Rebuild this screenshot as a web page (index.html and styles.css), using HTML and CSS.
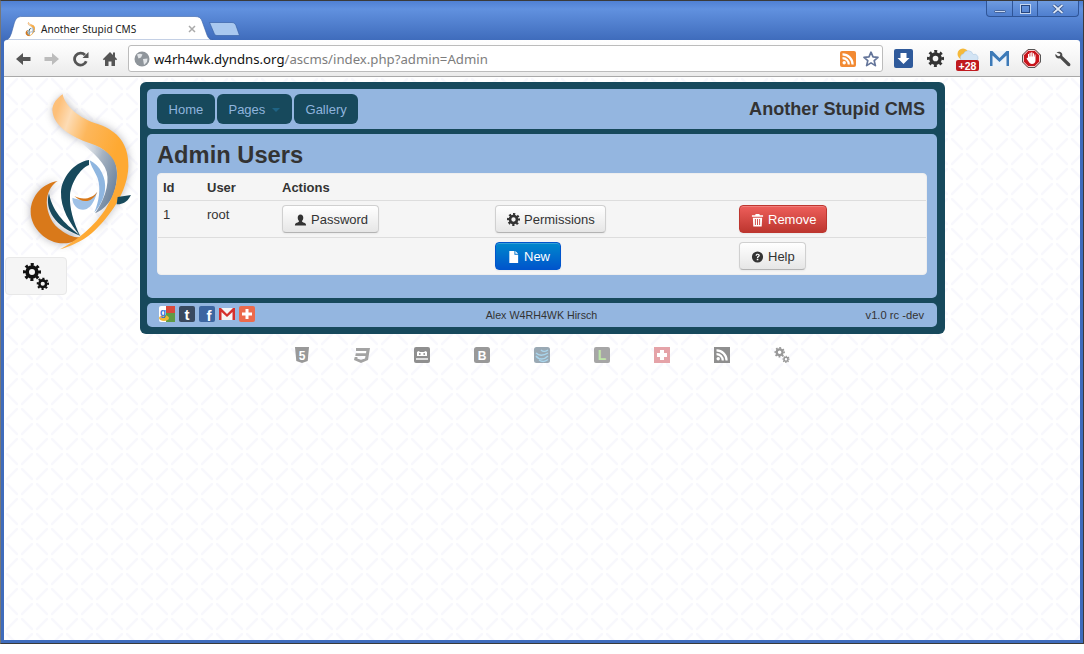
FILE: index.html
```html
<!DOCTYPE html>
<html lang="en">
<head>
<meta charset="utf-8">
<title>Another Stupid CMS</title>
<link rel="stylesheet" href="styles.css">
</head>
<body>
<svg class="defs" width="0" height="0" aria-hidden="true">
  <defs>
    <linearGradient id="lgOrange" x1="0.1" y1="0.05" x2="0.75" y2="0.5">
      <stop offset="0" stop-color="#fdc07a"/><stop offset="0.2" stop-color="#fddcb5"/><stop offset="0.5" stop-color="#fdb75c"/><stop offset="1" stop-color="#fea932"/>
    </linearGradient>
    <linearGradient id="lgGray" x1="0" y1="0" x2="1" y2="0.6">
      <stop offset="0" stop-color="#fff" stop-opacity="0.1"/><stop offset="0.6" stop-color="#a8b4c2"/><stop offset="1" stop-color="#6f86a0"/>
    </linearGradient>
    <filter id="fShadow" x="-30%" y="-30%" width="160%" height="160%">
      <feGaussianBlur stdDeviation="12"/>
    </filter>
    <symbol id="logo" viewBox="0 0 369 510">
      <g filter="url(#fShadow)" opacity="0.4" fill="#445">
        <path d="M128 288C85 295 48 330 47 380C47 430 95 475 145 475C165 475 185 468 197 455L130 430C105 410 92 370 96 340C100 315 112 298 128 288Z"/>
        <path d="M143 28C150 62 190 100 250 118C310 138 342 180 340 245C338 320 285 395 230 445L270 375C295 335 312 290 305 250C298 215 270 190 225 175C170 155 115 125 112 75Z"/>
      </g>
      <path fill="url(#lgGray)" d="M170 150C220 170 270 190 292 215C312 240 310 300 290 340C275 365 255 380 240 385C265 350 285 300 275 260C265 225 220 190 170 150Z"/>
      <path fill="#d9791a" d="M128 288C85 295 48 330 47 380C47 430 95 475 145 475C165 475 185 468 197 455C175 462 150 445 130 430C105 410 92 370 96 340C100 315 112 298 128 288Z"/>
      <path fill="#17495c" d="M102 325C88 375 120 425 197 453C160 425 112 385 102 325Z"/>
      <path fill="url(#lgOrange)" d="M143 28C150 62 190 100 250 118C310 138 342 180 340 245C338 320 285 395 230 445C200 470 165 485 135 493C190 465 240 420 270 375C295 335 312 290 305 250C298 215 270 190 225 175C170 155 115 125 112 75C112 55 128 38 143 28Z"/>
      <path fill="#17495c" d="M222 225C175 232 140 280 138 320C136 370 165 415 195 452C175 410 163 370 165 330C168 295 195 250 222 240Z"/>
      <path fill="#8fb6e0" d="M224 226C255 240 275 280 270 315C266 345 250 370 238 382C252 350 258 310 248 280C240 260 228 245 224 226Z"/>
      <path fill="#9fc1e6" d="M172 338C172 365 195 380 215 372C230 365 240 345 246 322C230 345 205 350 172 338Z"/>
      <path fill="#d9791a" d="M178 333C200 346 232 342 247 320C235 350 205 358 178 333Z"/>
      <path fill="#17495c" d="M308 336L348 330C340 345 330 358 305 358Z"/>
    </symbol>
    <symbol id="gear" viewBox="0 0 24 24">
      <circle cx="12" cy="12" r="6.5" fill="none" stroke="currentColor" stroke-width="5"/>
      <circle cx="12" cy="12" r="10" fill="none" stroke="currentColor" stroke-width="4" stroke-dasharray="3.927 3.927" transform="rotate(-11.25 12 12)"/>
    </symbol>
    <symbol id="gears" viewBox="0 0 26 27">
      <use href="#gear" x="0" y="0" width="18" height="18"/>
      <use href="#gear" x="13.500" y="14.500" width="12.500" height="12.500"/>
    </symbol>
    <symbol id="rss" viewBox="0 0 16 16">
      <circle cx="4.2" cy="11.8" r="1.7" fill="#fff"/>
      <path d="M2.5 7.2a6.3 6.3 0 0 1 6.3 6.3M2.5 3.4a10.1 10.1 0 0 1 10.1 10.1" fill="none" stroke="#fff" stroke-width="2.2"/>
    </symbol>
  </defs>
</svg>

<div class="window">
  <div class="titlebar">
    <div class="tab">
      <svg class="tab-shape" viewBox="0 0 208 24" preserveAspectRatio="none" aria-hidden="true">
        <path d="M0 24C4 24 5 21 6.500 17L9 8C10.500 3 12 0.500 17 0.500H190C194 0.500 196 2 197 5L202 19C203 22 205 24 208 24Z" fill="#fff" stroke="#3a63a8" stroke-width="0.6"/>
      </svg>
      <svg class="tab-favicon" aria-hidden="true"><use href="#logo"/></svg>
      <span class="tab-title">Another Stupid CMS</span>
      <svg class="tab-close" viewBox="0 0 8 8" aria-hidden="true"><path d="M1 1L7 7M7 1L1 7" stroke="#aaa" stroke-width="1.5"/></svg>
    </div>
    <svg class="newtab" viewBox="0 0 31 14" aria-hidden="true">
      <path d="M0.500 0.500H23C25 0.500 26 1.500 27 3.500L30.500 13.500H8C6 13.500 5.500 12.500 5 11Z" fill="#a9c8ef" stroke="#3a63a8" stroke-width="0.7"/>
    </svg>
    <div class="winctl">
      <div class="winbtn w-min"><svg viewBox="0 0 12 3" width="12" height="3" aria-hidden="true"><rect x="0.5" y="0.5" width="11" height="2" rx="1" fill="#c5d6ef" stroke="#26457e" stroke-width="0.7"/></svg></div>
      <div class="winbtn w-max"><svg viewBox="0 0 11 10" width="11" height="10" aria-hidden="true"><rect x="1.5" y="1.5" width="8" height="7" fill="none" stroke="#26457e" stroke-width="1"/><rect x="0.5" y="0.5" width="10" height="9" fill="none" stroke="#c5d6ef" stroke-width="1"/></svg></div>
      <div class="winbtn w-close"><svg viewBox="0 0 12 10" width="12" height="10" aria-hidden="true"><path d="M1.5 1L10.5 9M10.5 1L1.5 9" stroke="#26457e" stroke-width="3.2"/><path d="M1.5 1L10.5 9M10.5 1L1.5 9" stroke="#dbe6f6" stroke-width="1.8"/></svg></div>
    </div>
  </div>

  <div class="toolbar">
    <div class="navgroup">
      <svg class="tbi" viewBox="0 0 16 16" aria-hidden="true"><path d="M8 2L1 8L8 14V10H15.5V6H8Z" fill="#555"/></svg>
      <svg class="tbi" viewBox="0 0 16 16" aria-hidden="true"><path d="M8 2L15 8L8 14V10H.5V6H8Z" fill="#bcbcbc"/></svg>
      <svg class="tbi" viewBox="0 0 16 16" aria-hidden="true"><path d="M13.2 10.2A6 6 0 1 1 12 4" fill="none" stroke="#555" stroke-width="2.8"/><path d="M9.5 7H15.5V1Z" fill="#555"/></svg>
      <svg class="tbi" viewBox="0 0 16 16" aria-hidden="true"><path d="M8 1L0.8 8.2L2 9.3L3 8.5V15H6.5V10.5H9.5V15H13V8.5L14 9.3L15.2 8.2L13 6V1.5H11V4Z" fill="#555"/></svg>
    </div>
    <div class="omnibox">
      <svg class="globe" viewBox="0 0 16 16" aria-hidden="true"><circle cx="8" cy="8" r="7.5" fill="#8f959b"/><path d="M3 3.5C5 2.5 7 2.5 8.5 3.5L7 6.5L4.5 7.5ZM9 8L13.5 7.5L13 11L10 14Z" fill="#e3e6e9"/></svg>
      <span class="url"><span class="url-host">w4rh4wk.dyndns.org</span>/ascms/index.php?admin=Admin</span>
      <svg class="omni-rss" viewBox="0 0 16 16" aria-hidden="true"><rect width="16" height="16" rx="2" fill="#f28a33"/><use href="#rss"/></svg>
      <svg class="omni-star" viewBox="0 0 16 16" aria-hidden="true"><path d="M8 1.2L10 5.9L15 6.3L11.2 9.6L12.4 14.6L8 11.9L3.6 14.6L4.8 9.6L1 6.3L6 5.9Z" fill="#fff" stroke="#64759a" stroke-width="1.7" stroke-linejoin="round"/></svg>
    </div>
    <div class="actions">
      <div class="slot"><svg width="19" height="19" viewBox="0 0 19 19" aria-hidden="true"><rect width="19" height="19" rx="2" fill="#2f5a9b"/><path d="M6.5 4H12.5V9H15.5L9.5 15L3.5 9H6.5Z" fill="#fff"/></svg></div>
      <div class="slot slot-gear"><svg width="17" height="17" aria-hidden="true"><use href="#gear"/></svg></div>
      <div class="slot weather">
        <svg width="23" height="24" viewBox="0 0 23 24" aria-hidden="true">
          <circle cx="7" cy="7" r="5.5" fill="#f5b93a"/>
          <path d="M6 14A4 4 0 0 1 7.500 6.800A5 5 0 0 1 17 7.500A3.500 3.500 0 0 1 20 14Z" fill="#d3e4f4" stroke="#a8c4de" stroke-width="0.5"/>
          <rect x="0" y="13" width="23" height="11" rx="2" fill="#c01a1f"/>
          <text x="11.500" y="22.500" class="badge-text" text-anchor="middle">+28</text>
        </svg>
      </div>
      <div class="slot"><svg width="19" height="15" viewBox="0 0 19 15" aria-hidden="true"><rect width="19" height="15" fill="#eef3f9"/><path d="M0 0H2.500L9.500 7L16.500 0H19V15H16.500V4.500L9.500 11L2.500 4.500V15H0Z" fill="#3d7ab8"/></svg></div>
      <div class="slot"><svg width="19" height="19" viewBox="0 0 19 19" aria-hidden="true"><path d="M6 0.500H13L18.500 6V13L13 18.500H6L0.500 13V6Z" fill="#c8151c" stroke="#555" stroke-width="1"/><path d="M6.200 1.500H12.800L17.500 6.200V12.800L12.800 17.500H6.200L1.500 12.800V6.200Z" fill="none" stroke="#fff" stroke-width="0.800"/><path d="M6 8.500V5H7V7.500H7.500V3.800H8.700V7.500H9.200V3.300H10.400V7.500H10.900V4.300H12V7.500H12.500V5.500H13.500V11.500C13.500 13.500 12 15 10 15C8.300 15 7.300 14 6.500 12.500L4.500 9.500L5.500 8.800Z" fill="#fff"/></svg></div>
      <div class="slot"><svg width="16" height="16" viewBox="0 0 16 16" aria-hidden="true"><path d="M1.500 1.500C3.500 0 6 0.500 7 2.500C7.500 3.700 7.300 4.800 7.300 5L15 12.500C15.700 13.300 15.500 14.300 14.800 14.900C14 15.500 13.200 15.400 12.500 14.800L5 7.300C3 8 1 7 0.500 5C0.300 4.300 0.300 3.700 0.500 3L3 5.300L5 4.800L5.300 3Z" fill="#4a4a4a"/></svg></div>
    </div>
  </div>

  <main class="page">
    <aside class="side">
      <svg class="logo" aria-hidden="true"><use href="#logo"/></svg>
      <div class="admin-btn"><svg width="26" height="27" aria-hidden="true"><use href="#gears"/></svg></div>
    </aside>
    <div class="center">
      <div class="shell">
        <header class="panel navbar">
          <nav class="navlinks">
            <a class="navlink">Home</a>
            <a class="navlink">Pages<span class="caret"></span></a>
            <a class="navlink">Gallery</a>
          </nav>
          <div class="brand">Another Stupid CMS</div>
        </header>
        <section class="panel content">
          <h1 class="heading">Admin Users</h1>
          <table class="users">
            <colgroup><col class="c1"><col class="c2"><col class="c3"><col class="c4"><col class="c5"></colgroup>
            <thead>
              <tr><th>Id</th><th>User</th><th colspan="3">Actions</th></tr>
            </thead>
            <tbody>
              <tr class="row">
                <td>1</td><td>root</td>
                <td><a class="btn"><svg class="ic" viewBox="0 0 14 14" aria-hidden="true"><path d="M7 1C9 1 10 2.500 10 4.500C10 6 9.300 7.300 8.500 8C8.500 9 9.500 9.300 11 10C12.500 10.600 13 11 13 13H1C1 11 1.500 10.600 3 10C4.500 9.300 5.500 9 5.500 8C4.700 7.300 4 6 4 4.500C4 2.500 5 1 7 1Z" fill="#333"/></svg>Password</a></td>
                <td><a class="btn"><svg class="ic cog" viewBox="0 0 24 24" aria-hidden="true"><use href="#gear"/></svg>Permissions</a></td>
                <td><a class="btn btn-red"><svg class="ic" viewBox="0 0 14 14" aria-hidden="true"><path d="M5 0.500H9L9.500 2H13V3.500H1V2H4.500ZM2 4.500H12L11.500 14H2.500ZM4.200 6V12.500H5.200V6ZM6.500 6V12.500H7.500V6ZM8.800 6V12.500H9.800V6Z" fill="#fff" fill-rule="evenodd"/></svg>Remove</a></td>
              </tr>
              <tr class="row">
                <td></td><td></td><td></td>
                <td><a class="btn btn-blue"><svg class="ic" viewBox="0 0 14 14" aria-hidden="true"><path d="M2.500 0.500H8V4.500H12V13.500H2.500ZM9 0.500L12 3.500H9Z" fill="#fff"/></svg>New</a></td>
                <td><a class="btn"><svg class="ic" viewBox="0 0 14 14" aria-hidden="true"><circle cx="7" cy="7" r="6" fill="#333"/><path d="M4.800 5.500C5 4 6 3.500 7.200 3.500C8.600 3.500 9.500 4.300 9.500 5.300C9.500 6.800 7.800 6.800 7.800 8H6.300C6.300 6 8 6 8 5.300C8 4.900 7.700 4.700 7.200 4.700C6.700 4.700 6.400 5 6.300 5.700ZM6.200 8.800H7.900V10.400H6.200Z" fill="#fff"/></svg>Help</a></td>
              </tr>
            </tbody>
          </table>
        </section>
        <footer class="panel foot">
          <div class="social">
            <svg class="soc" viewBox="0 0 16 16" aria-hidden="true"><rect width="16" height="16" rx="2" fill="#fff"/><rect x="7" width="9" height="8" fill="#d9493b"/><rect x="7" y="7" width="9" height="9" fill="#5f9b45"/><ellipse cx="5" cy="12" rx="5" ry="3" fill="#f2b632"/><text x="1" y="9.500" class="soc-g">g</text></svg>
            <svg class="soc" viewBox="0 0 16 16" aria-hidden="true"><rect width="16" height="16" rx="2" fill="#39495f"/><text x="8" y="13.500" class="soc-l" text-anchor="middle">t</text></svg>
            <svg class="soc" viewBox="0 0 16 16" aria-hidden="true"><rect width="16" height="16" rx="2" fill="#3d66a1"/><text x="10" y="14.500" class="soc-l" text-anchor="middle">f</text></svg>
            <svg class="soc" viewBox="0 0 16 16" aria-hidden="true"><rect y="2" width="16" height="12" fill="#f5f5f5"/><path d="M0 2H2L8 8L14 2H16V14H13.500V6L8 11L2.500 6V14H0Z" fill="#d5312d"/></svg>
            <svg class="soc" viewBox="0 0 16 16" aria-hidden="true"><rect width="16" height="16" rx="2" fill="#ec6a4c"/><path d="M6.500 3H9.500V6.500H13V9.500H9.500V13H6.500V9.500H3V6.500H6.500Z" fill="#fff"/></svg>
          </div>
          <div class="foot-name">Alex W4RH4WK Hirsch</div>
          <div class="foot-ver">v1.0 rc -dev</div>
        </footer>
      </div>
      <div class="badges">
        <svg class="bdg" viewBox="0 0 16 16" aria-hidden="true"><path d="M1 0H15L13.700 14L8 16L2.300 14Z" fill="#999"/><text x="8" y="12.500" class="bdg-t" text-anchor="middle">5</text></svg>
        <svg class="bdg" viewBox="0 0 16 16" aria-hidden="true"><path d="M2 1H16L14 13L7 16L0 13L0.700 10H3.500L3.300 11.500L7 12.800L11 11.500L11.500 9H1.300L1.800 6.300H12L12.300 4H2Z" fill="#a3a3a3"/></svg>
        <svg class="bdg" viewBox="0 0 16 16" aria-hidden="true"><rect width="16" height="16" rx="2" fill="#8f8f8f"/><path d="M3 5L4.500 4L6 5H10L11.500 4L13 5V9H3Z" fill="#fff"/><path d="M2 11H14V13H2Z" fill="#fff" opacity="0.7"/><circle cx="5.800" cy="7" r="0.900" fill="#8f8f8f"/><circle cx="10.200" cy="7" r="0.900" fill="#8f8f8f"/></svg>
        <svg class="bdg" viewBox="0 0 16 16" aria-hidden="true"><rect width="16" height="16" rx="2.500" fill="#999"/><text x="8" y="12.500" class="bdg-t" text-anchor="middle">B</text></svg>
        <svg class="bdg" viewBox="0 0 16 16" aria-hidden="true"><rect width="16" height="16" rx="2.500" fill="#9aa9b4"/><path d="M2 6C5 9 9 9 14 6M2 9C5 13 10 13 14 9M5 13C8 15 11 15 14 12.500M7 3C9 5 11 5 14 3" fill="none" stroke="#a9d6ee" stroke-width="1.400"/></svg>
        <svg class="bdg" viewBox="0 0 16 16" aria-hidden="true"><rect width="16" height="16" rx="2" fill="#a6a6a6"/><text x="8" y="13" class="bdg-t bdg-green" text-anchor="middle">L</text></svg>
        <svg class="bdg" viewBox="0 0 16 16" aria-hidden="true"><rect width="16" height="16" fill="#e5a3a8"/><path d="M6 3H10V6H13V10H10V13H6V10H3V6H6Z" fill="#fff"/></svg>
        <svg class="bdg" viewBox="0 0 16 16" aria-hidden="true"><rect width="16" height="16" fill="#8f8f8f"/><use href="#rss"/></svg>
        <svg class="bdg bdg-gears" aria-hidden="true"><use href="#gears"/></svg>
      </div>
    </div>
  </main>
</div>
</body>
</html>
```
FILE: styles.css
```css
* { box-sizing: border-box; }
html, body { margin: 0; padding: 0; }
body {
  width: 1084px;
  height: 654px;
  overflow: hidden;
  background: #fff;
  font-family: "Liberation Sans", Arial, sans-serif;
  font-size: 13px;
  color: #333;
}
.defs { position: absolute; }

.window {
  width: 1084px;
  height: 644px;
  display: flex;
  flex-direction: column;
  padding: 0 3px 3px 3px;
  border: 1px solid #3a3a3a;
  border-left-color: #777;
  background: linear-gradient(180deg, #4f80d3 0, #6191df 8px, #3f6cbc 39px, #3f6cbc 100%);
}

.titlebar { height: 39px; display: flex; align-items: flex-end; flex: none; }
.tab {
  position: relative;
  width: 208px;
  height: 24px;
  margin-left: 1px;
  display: flex;
  align-items: center;
  padding: 2px 17px 0 19px;
  flex: none;
}
.tab-shape { position: absolute; inset: 0; width: 100%; height: 100%; }
.tab-favicon { position: relative; width: 12px; height: 16px; flex: none; }
.tab-title {
  position: relative;
  margin-left: 5px;
  flex: 1;
  font: 10.1px "Noto Sans", sans-serif;
  color: #222;
  white-space: nowrap;
}
.tab-close { position: relative; width: 8px; height: 8px; flex: none; }
.newtab { width: 31px; height: 14px; margin: 0 0 4px -4px; flex: none; }
.winctl {
  margin-left: auto;
  margin-right: 1px;
  align-self: flex-start;
  display: flex;
  height: 16px;
  border: 1px solid #2f5597;
  border-top: 0;
  border-radius: 0 0 4px 4px;
  background: linear-gradient(180deg, #6e9be0, #4f7fcf);
}
.winbtn { display: flex; align-items: center; justify-content: center; border-left: 1px solid #2f5597; }
.w-min { width: 25px; border-left: 0; padding-top: 6px; }
.w-max { width: 25px; }
.w-close { width: 41px; }

.toolbar {
  height: 37px;
  flex: none;
  display: flex;
  align-items: center;
  padding: 1px 0 0 11px;
  border-bottom: 1px solid #a9a9a9;
  border-radius: 3px 3px 0 0;
  background: linear-gradient(180deg, #fff 0, #f8f8f8 40%, #ebebeb 100%);
}
.navgroup { display: flex; gap: 13px; margin-right: 10px; }
.tbi { width: 16px; height: 16px; display: block; }
.omnibox {
  width: 755px;
  height: 27px;
  display: flex;
  align-items: center;
  padding: 0 3px 0 5px;
  background: #fff;
  border: 1px solid #bcbcbc;
  border-radius: 3px;
}
.globe { width: 16px; height: 16px; flex: none; }
.url {
  flex: 1;
  margin-left: 4px;
  font: 13.2px "Noto Sans", sans-serif;
  color: #7d7d7d;
  white-space: nowrap;
}
.url-host { color: #111; }
.omni-rss { width: 16px; height: 16px; flex: none; }
.omni-star { width: 16px; height: 16px; margin-left: 7px; flex: none; }
.actions { display: flex; margin-left: 4px; }
.slot { width: 32px; display: flex; align-items: center; justify-content: center; }
.slot svg { display: block; }
.slot-gear { color: #333; }
.badge-text { font: bold 10.5px "Liberation Sans", sans-serif; fill: #fff; }

.page {
  flex: 1;
  display: flex;
  align-items: flex-start;
  background-color: #fff;
  background-image: url("data:image/svg+xml,%3Csvg xmlns='http://www.w3.org/2000/svg' width='30' height='30'%3E%3Cpath d='M3 12L13 2M18 2L28 12M3 17L13 27M18 27L28 17' stroke='%23f8f8fd' stroke-width='2.5' stroke-linecap='round'/%3E%3C/svg%3E");
}
.side { width: 136px; flex: none; }
.logo { display: block; width: 123px; height: 170px; margin: 8px 0 2px 11px; overflow: visible; }
.admin-btn {
  width: 62px;
  height: 38px;
  margin-left: 1px;
  display: flex;
  align-items: center;
  justify-content: center;
  color: #111;
  background: #f5f5f5;
  border: 1px solid #e8e8e8;
  border-radius: 4px;
}
.center { width: 805px; flex: none; margin-top: 5px; }
.shell {
  display: flex;
  flex-direction: column;
  gap: 5px;
  padding: 7px 8px 7px 7px;
  background: #17495c;
  border-radius: 6px;
}
.panel { background: #94b6e0; border-radius: 5px; }
.navbar {
  height: 40px;
  display: flex;
  align-items: center;
  justify-content: space-between;
  padding: 0 12px 0 10px;
}
.navlinks { display: flex; gap: 2px; }
.navlink {
  display: flex;
  align-items: center;
  height: 30px;
  padding: 0 11.6px;
  color: #8fb4dd;
  font-size: 13px;
  background: #17495c;
  border-radius: 6px;
}
.caret {
  width: 0;
  height: 0;
  margin-left: 7px;
  margin-top: 2px;
  border: 4px solid transparent;
  border-top-color: #1f6384;
  border-bottom: 0;
}
.brand { font-size: 18.1px; font-weight: bold; color: #333; }
.content { height: 164px; padding: 9px 10px 10px; }
.heading { margin: 0 0 6px; font-size: 23.7px; line-height: 24px; font-weight: bold; color: #333; }
.users {
  width: 770px;
  table-layout: fixed;
  border-collapse: separate;
  border-spacing: 0;
  background: #f5f5f5;
  border: 1px solid #eee;
  border-radius: 4px;
  font-size: 13px;
}
.c1 { width: 44px; }
.c2 { width: 75px; }
.c3 { width: 213px; }
.c4 { width: 244px; }
.users th { text-align: left; padding: 6px 6px 5px 5px; line-height: 15px; }
.users td { padding: 4px 6px 4px 5px; line-height: 18px; vertical-align: top; border-top: 1px solid #ddd; }
.row td:nth-child(-n+2) { padding-top: 5px; }

.btn {
  display: inline-flex;
  align-items: center;
  height: 28px;
  padding: 1px 10px 0 11px;
  color: #333;
  background: linear-gradient(180deg, #fff, #e6e6e6);
  border: 1px solid #d0d0d0;
  border-bottom-color: #b3b3b3;
  border-radius: 4px;
  box-shadow: inset 0 1px 0 rgba(255,255,255,.2), 0 1px 2px rgba(0,0,0,.05);
  font-size: 13px;
}
.ic { width: 13px; height: 14px; margin-right: 4px; flex: none; }
.cog { color: #333; height: 13px; }
.btn-red { color: #fff; background: linear-gradient(180deg, #ee5f5b, #bd362f); border-color: #bd362f; }
.btn-blue { color: #fff; background: linear-gradient(180deg, #0088cc, #0055cc); border-color: #0055cc; }

.foot {
  height: 24px;
  display: grid;
  grid-template-columns: 1fr auto 1fr;
  align-items: center;
  padding: 0 13px 0 12px;
  font-size: 10.7px;
}
.social { display: flex; gap: 4px; margin-top: -2px; }
.soc { width: 16px; height: 16px; display: block; }
.soc-g { font: bold 10px "Liberation Sans", sans-serif; fill: #3b74d8; }
.soc-l { font: bold 15px "Liberation Sans", sans-serif; fill: #fff; }
.foot-ver { text-align: right; font-size: 11.2px; }

.badges { display: flex; gap: 44px; padding-left: 154px; margin-top: 13px; }
.bdg { width: 16px; height: 16px; display: block; flex: none; }
.bdg-t { font: bold 12px "Liberation Sans", sans-serif; fill: #fff; }
.bdg-green { fill: #bfe6a8; font-size: 14px; }
.bdg-gears { color: #999; }
```
